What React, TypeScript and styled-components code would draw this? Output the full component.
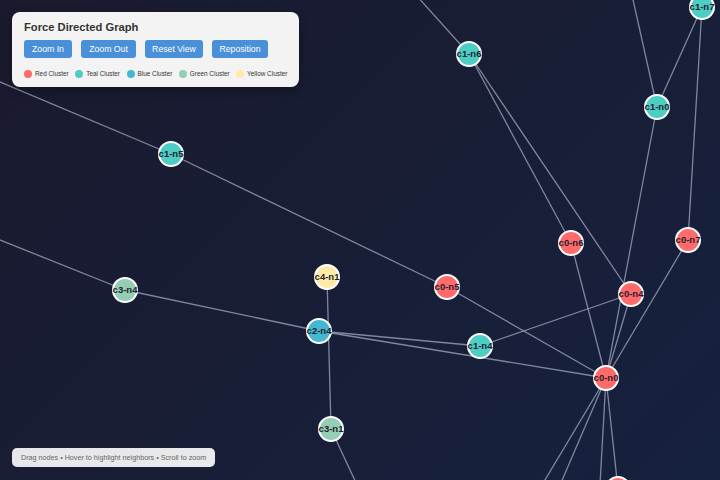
import React from 'react';
import styled, { createGlobalStyle } from 'styled-components';

const GlobalStyle = createGlobalStyle`
  html, body {
    margin: 0;
    padding: 0;
    width: 720px;
    height: 480px;
    overflow: hidden;
    font-family: "Liberation Sans", Arial, sans-serif;
  }
`;

const Stage = styled.div`
  position: relative;
  width: 720px;
  height: 480px;
  overflow: hidden;
  background: linear-gradient(135deg, #1a1a2e 0%, #16213e 100%);
`;

const Canvas = styled.svg`
  position: absolute;
  inset: 0;
  display: block;
`;

const Panel = styled.div`
  position: absolute;
  top: 12px;
  left: 12px;
  width: 287px;
  box-sizing: border-box;
  padding: 7px 12px 8px;
  background: rgba(255, 255, 255, 0.95);
  border-radius: 8px;
  box-shadow: 0 4px 12px rgba(0, 0, 0, 0.3);
`;

const Title = styled.h3`
  margin: 0 0 5px;
  font-size: 11.2px;
  line-height: 16px;
  font-weight: 700;
  color: #333;
`;

const Toolbar = styled.div`
  display: flex;
  gap: 9px;
`;

const Button = styled.button<{ $w: number }>`
  width: ${p => p.$w}px;
  height: 18px;
  padding: 0;
  border: none;
  border-radius: 3px;
  background: #4a90d9;
  color: #fff;
  font-family: inherit;
  font-size: 8.7px;
  cursor: pointer;
`;

const Legend = styled.div`
  display: flex;
  align-items: center;
  gap: 6.5px;
  margin-top: 11px;
  white-space: nowrap;
`;

const LegendItem = styled.div`
  display: flex;
  flex-shrink: 0;
  align-items: center;
  gap: 3px;
  font-size: 6.4px;
  line-height: 10px;
  color: #333;
`;

const Dot = styled.span<{ $c: string }>`
  flex-shrink: 0;
  width: 8px;
  height: 8px;
  border-radius: 50%;
  background: ${p => p.$c};
`;

const Hint = styled.div`
  position: absolute;
  left: 12px;
  top: 448px;
  width: 203px;
  height: 19px;
  box-sizing: border-box;
  padding: 0 9px;
  background: rgba(255, 255, 255, 0.9);
  border-radius: 5px;
  color: #666;
  font-size: 7.2px;
  line-height: 19px;
  white-space: nowrap;
  overflow: hidden;
`;

const NodeLabel = styled.text`
  font-family: "Liberation Sans", Arial, sans-serif;
  font-size: 9.5px;
  font-weight: 700;
  fill: #1f1f2e;
`;

const COLORS: Record<string, string> = {
  c0: '#ff6b6b',
  c1: '#4ecdc4',
  c2: '#45b7d1',
  c3: '#96ceb4',
  c4: '#ffeaa7',
};

const nodes: { id: string; x: number; y: number }[] = [
  { id: 'c1-n7', x: 702, y: 7 },
  { id: 'c1-n6', x: 469, y: 54 },
  { id: 'c1-n0', x: 657, y: 107 },
  { id: 'c1-n5', x: 171, y: 154 },
  { id: 'c0-n6', x: 571, y: 243 },
  { id: 'c0-n7', x: 688, y: 240 },
  { id: 'c4-n1', x: 327, y: 277 },
  { id: 'c0-n5', x: 447, y: 287 },
  { id: 'c3-n4', x: 125, y: 290 },
  { id: 'c0-n4', x: 631, y: 294 },
  { id: 'c2-n4', x: 319, y: 331 },
  { id: 'c1-n4', x: 480, y: 346 },
  { id: 'c0-n0', x: 606, y: 378 },
  { id: 'c3-n1', x: 331, y: 429 },
  { id: 'c0-n2', x: 618, y: 489 },
];

const pos = Object.fromEntries(nodes.map(n => [n.id, n]));

// edges between visible nodes
const links: [string, string][] = [
  ['c1-n5', 'c0-n5'],
  ['c0-n5', 'c0-n0'],
  ['c3-n4', 'c2-n4'],
  ['c2-n4', 'c1-n4'],
  ['c2-n4', 'c0-n0'],
  ['c4-n1', 'c3-n1'],
  ['c1-n4', 'c0-n4'],
  ['c0-n4', 'c0-n0'],
  ['c0-n6', 'c0-n0'],
  ['c0-n7', 'c0-n0'],
  ['c1-n7', 'c0-n7'],
  ['c1-n7', 'c1-n0'],
  ['c1-n0', 'c0-n0'],
  ['c1-n6', 'c0-n6'],
  ['c1-n6', 'c0-n4'],
  ['c0-n0', 'c0-n2'],
];

// edges that run off the edge of the view
const strays: [number, number, number, number][] = [
  [-100, 40, 171, 154],
  [-60, 216, 125, 290],
  [380, -45, 469, 54],
  [623, -45, 657, 107],
  [331, 429, 364, 500],
  [606, 378, 521, 520],
  [606, 378, 545, 520],
  [606, 378, 598, 520],
];

const legend = [
  { label: 'Red Cluster', c: COLORS.c0 },
  { label: 'Teal Cluster', c: COLORS.c1 },
  { label: 'Blue Cluster', c: COLORS.c2 },
  { label: 'Green Cluster', c: COLORS.c3 },
  { label: 'Yellow Cluster', c: COLORS.c4 },
];

export default function App() {
  return (
    <Stage>
      <GlobalStyle />
      <Canvas width={720} height={480}>
        <g stroke="#a3a8bd" strokeOpacity={0.75} strokeWidth={1.3}>
          {strays.map(([x1, y1, x2, y2], i) => (
            <line key={'s' + i} x1={x1} y1={y1} x2={x2} y2={y2} />
          ))}
          {links.map(([a, b]) => (
            <line key={a + b} x1={pos[a].x} y1={pos[a].y} x2={pos[b].x} y2={pos[b].y} />
          ))}
        </g>
        {nodes.map(n => (
          <g key={n.id} transform={`translate(${n.x},${n.y})`}>
            <circle r={12} fill={COLORS[n.id.slice(0, 2)]} stroke="#fff" strokeWidth={2} />
            <NodeLabel textAnchor="middle" dy="3.4">{n.id}</NodeLabel>
          </g>
        ))}
      </Canvas>

      <Panel>
        <Title>Force Directed Graph</Title>
        <Toolbar>
          <Button $w={48}>Zoom In</Button>
          <Button $w={55}>Zoom Out</Button>
          <Button $w={58}>Reset View</Button>
          <Button $w={56}>Reposition</Button>
        </Toolbar>
        <Legend>
          {legend.map(l => (
            <LegendItem key={l.label}>
              <Dot $c={l.c} />
              {l.label}
            </LegendItem>
          ))}
        </Legend>
      </Panel>

      <Hint>Drag nodes • Hover to highlight neighbors • Scroll to zoom</Hint>
    </Stage>
  );
}
